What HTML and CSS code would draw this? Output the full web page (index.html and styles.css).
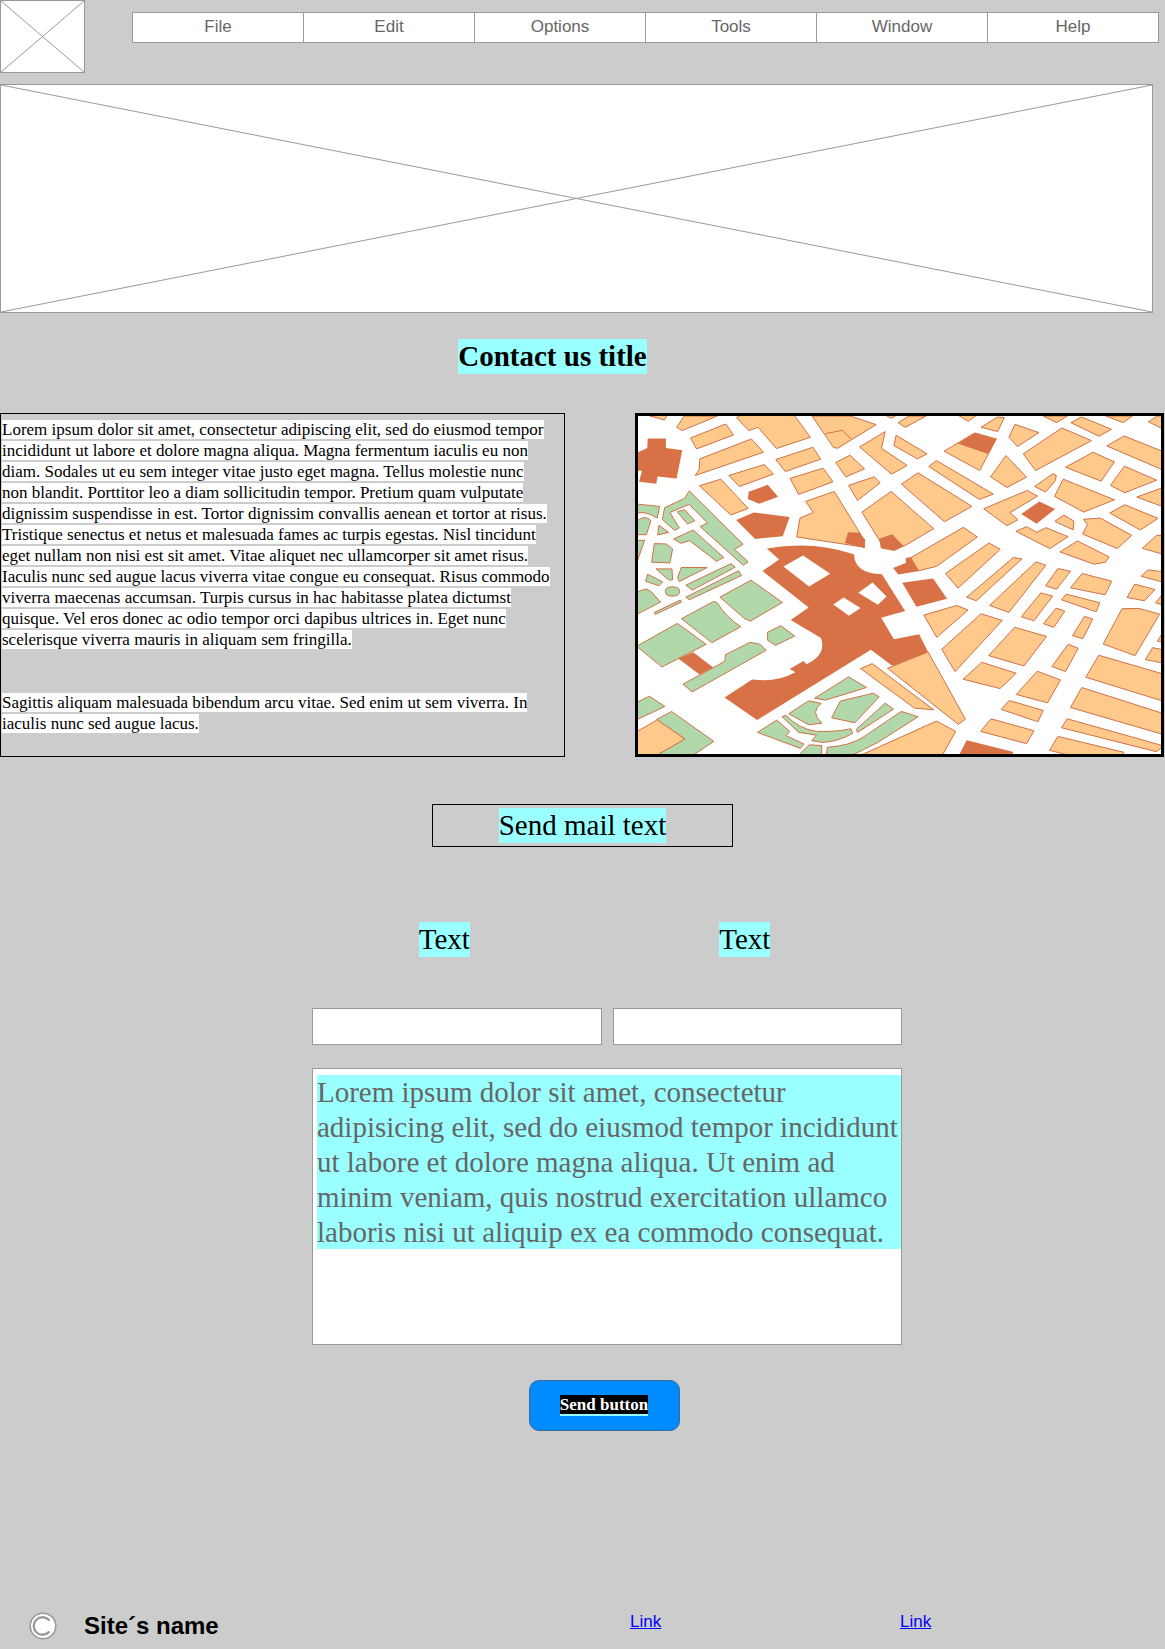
FILE: index.html
```html
<!DOCTYPE html>
<html lang="en">
<head>
<meta charset="utf-8">
<meta name="viewport" content="width=device-width, initial-scale=1">
<title>Contact us</title>
<link rel="stylesheet" href="styles.css">
</head>
<body>
<header class="header">
  <svg class="placeholder logo" viewBox="0 0 100 100" preserveAspectRatio="none" role="img" aria-label="Logo"><path d="M0 0L100 100M100 0L0 100"/></svg>
  <nav class="menu">
    <a href="#">File</a>
    <a href="#">Edit</a>
    <a href="#">Options</a>
    <a href="#">Tools</a>
    <a href="#">Window</a>
    <a href="#">Help</a>
  </nav>
</header>
<main>
  <svg class="placeholder banner" viewBox="0 0 100 100" preserveAspectRatio="none" role="img" aria-label="Banner"><path d="M0 0L100 100M100 0L0 100"/></svg>
  <h1 class="title"><span class="mark">Contact us title</span></h1>
  <section class="about">
    <div class="copy">
      <p><span>Lorem ipsum dolor sit amet, consectetur adipiscing elit, sed do eiusmod tempor incididunt ut labore et dolore magna aliqua. Magna fermentum iaculis eu non diam. Sodales ut eu sem integer vitae justo eget magna. Tellus molestie nunc non blandit. Porttitor leo a diam sollicitudin tempor. Pretium quam vulputate dignissim suspendisse in est. Tortor dignissim convallis aenean et tortor at risus. Tristique senectus et netus et malesuada fames ac turpis egestas. Nisl tincidunt eget nullam non nisi est sit amet. Vitae aliquet nec ullamcorper sit amet risus. Iaculis nunc sed augue lacus viverra vitae congue eu consequat. Risus commodo viverra maecenas accumsan. Turpis cursus in hac habitasse platea dictumst quisque. Vel eros donec ac odio tempor orci dapibus ultrices in. Eget nunc scelerisque viverra mauris in aliquam sem fringilla.</span></p>
      <p><span>Sagittis aliquam malesuada bibendum arcu vitae. Sed enim ut sem viverra. In iaculis nunc sed augue lacus.</span></p>
    </div>
    <svg class="map" viewBox="24 33 1572 1017" preserveAspectRatio="none" role="img" aria-label="Map">
      <!-- north-west -->
      <g>
        <path class="block" d="M60 33L103 45L112 30ZM140 67L163 33L262 33L157 77ZM182 99L288 57L311 90L200 132ZM210 162L365 102L401 142L196 212L208 194ZM297 212L404 179L431 208L329 245ZM209 243L273 223L355 311L303 331ZM320 38L335 30H493L542 97L440 131L385 67L357 77ZM438 164L550 127L573 163L467 200ZM481 221L580 190L610 231L507 269ZM528 290L614 260L692 387L706 428L501 397L511 340L551 323ZM547 33H662L740 59L624 130L612 128ZM588 86L638 76L665 103M618 173L661 151L705 192L649 216ZM657 242L734 216L752 234L684 287ZM697 322L785 260L913 372L823 425L754 414ZM690 126L767 80L756 130L833 182L786 208ZM767 30L785 40L802 30Z"/>
        <path class="brown" d="M53 101H108V129L157 136L140 221L83 215L79 237L27 231L36 198H24V142L52 129ZM357 261L414 240L445 276L388 297L354 283ZM319 346L372 323L480 337L459 395L376 403ZM655 383L690 384L707 405L705 430L646 415ZM749 402L788 389L823 425L794 439L754 431Z"/>
        <path class="brown" d="M411 432Q548 407 673 449Q676 508 757 509L827 620L755 640L793 705L869 690L896 743L795 783H786L724 736L382 948L284 880L367 826Q440 836 497 804L480 794L521 770L531 780Q591 752 574 701L483 647L537 609L398 499L448 465Z"/>
        <path class="hole" d="M461 486L520 453L602 508L538 546ZM686 565L729 534L771 576L745 601ZM611 600L642 579L693 611L658 634Z"/>
        <path class="park" d="M20 298L89 305L82 340Q45 317 20 326ZM20 350Q44 328 63 348L49 390H20ZM83 391L87 362L116 383ZM20 407H44L20 475ZM65 473L73 417L109 418L128 433L120 475ZM104 309L164 281L178 258L340 419L314 434L355 472L340 482L211 366L233 355L178 299L120 323L148 370L134 377L97 344ZM142 321L164 315L195 348L173 358ZM131 403L190 376L282 459L260 470L179 408L153 416ZM78 493H126L128 526H116ZM154 489H232L148 531L143 520ZM47 530L53 509L98 532L87 544ZM168 542L304 477L316 488L187 557ZM168 578L326 499L335 513L178 586ZM270 578L364 527L458 594L362 650L345 643Z"/>
      </g>
      <!-- north-east -->
      <g transform="translate(795 0)">
        <path class="block" d="M11 53L44 33H95L32 67ZM-2 122L5 91L98 147L69 162ZM149 139L241 84L306 102L256 197ZM190 30H248L221 49ZM260 67L310 36L330 38L310 80ZM344 97L362 58L434 83L370 125ZM387 147L503 69L592 107L424 197ZM289 216L335 152L397 217L338 248ZM103 185L126 167L297 268L255 284ZM21 238L71 204L233 305L150 351ZM447 33H520L487 53ZM530 53L562 36L652 73L615 94ZM635 33H715L688 53ZM763 50L790 33H810V74ZM638 123L690 93L810 141V197ZM514 187L597 142L661 171L621 229ZM649 242L691 184L788 226L692 264ZM421 245L476 207L486 211L484 227L454 262ZM507 223L661 285L569 322L481 275ZM728 277L810 247V307ZM268 312L399 257L430 274L347 324L371 345L338 363ZM647 325L692 300L792 341L739 376ZM482 350L509 331L539 349L537 376ZM568 344L618 340L713 392L670 432L565 388L580 360ZM365 380L397 366L428 383L455 369L522 396L467 432ZM745 431L788 392H810V450ZM497 442L550 409L645 457L634 473L600 479ZM46 461L207 368L249 397L127 485L72 499ZM153 507L284 415L318 434L191 551ZM741 515L762 496L810 502V534Z"/>
        <path class="brown" d="M190 116L241 84L306 104L281 147ZM381 328L435 290L483 313L427 357ZM-4 490L34 475V460L49 457L74 499L11 510ZM23 535L116 522L158 583L66 607Z"/>
      </g>
      <!-- south-west -->
      <g transform="translate(0 525)">
        <path class="brown" d="M145 238L190 219L250 265L209 286Z"/>
        <path class="park" d="M20 38L48 28L64 37L92 68L20 105ZM73 99L151 62L155 68L76 105ZM106 36Q106 22 127 22Q149 22 149 36Q149 50 127 50Q106 50 106 36ZM20 201L142 132L229 195L96 263ZM155 118L251 66L261 69Q290 115 333 142L246 190ZM413 159L453 139L495 170L437 198L414 183ZM159 315L285 246L287 226L361 189L391 195L409 213L187 338ZM20 370L58 351L105 382L20 422ZM80 421L125 397L252 487L188 530H75L165 480ZM555 357L657 293L711 325L587 363ZM477 404L537 365L575 373Q539 398 577 432L537 437ZM606 416L632 366L731 342L749 353L676 431ZM680 451L767 372L792 390L684 460ZM457 413L469 409Q507 449 560 457Q620 459 664 449L669 463Q620 490 577 490L546 485L560 468L507 460ZM383 460L441 423L480 457L469 470L523 495L512 508ZM505 530L539 497L577 500L575 530ZM590 530L593 505Q660 500 700 475L815 397L866 413Q800 455 745 490L665 530Z"/>
        <path class="block" d="M20 458L82 422L165 480L78 530H20ZM693 268L728 253L913 392L855 387ZM774 267L896 218L1008 420L987 436ZM690 530L921 426L979 457L938 530Z"/>
      </g>
      <!-- south-east -->
      <g transform="translate(795 525)">
        <path class="block" d="M217 53L357 -66L383 -62L246 64ZM286 78L425 -53L455 -43L344 99ZM88 107L187 78L221 92L127 174ZM142 210L260 103L324 123L182 277ZM381 112L440 40L475 50L419 124ZM454 19L491 -33L529 -25L487 29ZM529 25L564 -18L653 5L633 46ZM502 61L516 44L617 70L606 97ZM448 133L486 86L512 95L479 144ZM535 169L571 111L596 119L566 178ZM283 229L361 144L457 171L389 260ZM206 300L262 249L366 282L317 328ZM366 346L429 276L499 302L460 371ZM473 262L522 195L552 207L514 277ZM321 391L345 364L447 394L431 428ZM259 457L290 419L419 455L397 494ZM627 194L684 88L735 87L797 104L723 229ZM699 54L722 14L783 30L751 64ZM785 70L810 38V78ZM790 185L810 155V190ZM754 241L776 205L810 212V252ZM575 294L614 228L810 285V367ZM529 385L563 325L810 404V467ZM502 446L519 419L810 501L787 518ZM466 514L491 472L690 520L680 530H530Z"/>
        <path class="brown" d="M196 524L217 484L358 519L350 530H190Z"/>
      </g>
    </svg>
  </section>

  <h2 class="subtitle"><span class="mark">Send mail text</span></h2>

  <form class="form">
    <div class="field">
      <label for="first"><span class="mark">Text</span></label>
      <input id="first" type="text">
    </div>
    <div class="field">
      <label for="second"><span class="mark">Text</span></label>
      <input id="second" type="text">
    </div>
    <textarea class="message" aria-label="Message">Lorem ipsum dolor sit amet, consectetur adipisicing elit, sed do eiusmod tempor incididunt ut labore et dolore magna aliqua. Ut enim ad minim veniam, quis nostrud exercitation ullamco laboris nisi ut aliquip ex ea commodo consequat.</textarea>
    <button class="send" type="button"><span>Send button</span></button>
  </form>
</main>
<footer class="footer">
  <div class="brand">
    <svg class="copyright" viewBox="0 0 28 28" aria-hidden="true">
      <circle cx="14" cy="14" r="12.8" fill="#fff" stroke="#999" stroke-width="1.6"/>
      <path d="M19.8 7.8A8.8 8.8 0 1 0 19.8 20.2" fill="none" stroke="#999" stroke-width="2.4" stroke-linecap="round"/>
    </svg>
    <strong>Site´s name</strong>
  </div>
  <a href="#">Link</a>
  <a href="#">Link</a>
</footer>
</body>
</html>
```
FILE: styles.css
```css
* {
  box-sizing: border-box;
}

body {
  margin: 0;
  background: #ccc;
  color: #000;
  font-family: "Liberation Serif", "Times New Roman", serif;
}

h1,
h2,
p {
  margin: 0;
  font-weight: normal;
}

.header {
  display: flex;
  align-items: flex-start;
  gap: 47px;
  padding-right: 6px;
}

.placeholder {
  display: block;
  background: #fff;
  border: 1px solid #999;
}

.placeholder path {
  fill: none;
  stroke: #999;
  stroke-width: 1px;
  vector-effect: non-scaling-stroke;
}

.logo {
  flex: none;
  width: 85px;
  height: 73px;
}

.menu {
  display: flex;
  flex: 1;
  margin-top: 12px;
  border: 1px solid #999;
  background: #fff;
}

.menu a {
  flex: 1;
  padding: 1px 0 2px;
  color: #666;
  font: 17px/26px "Liberation Sans", Arial, sans-serif;
  text-align: center;
  text-decoration: none;
}

.menu a + a {
  border-left: 1px solid #999;
}

.banner {
  width: calc(100% - 12px);
  height: 229px;
  margin-top: 11px;
}

.mark {
  display: inline-block;
  background: #9ff;
  font-size: 29px;
  line-height: 35px;
  vertical-align: top;
}

.title {
  padding: 26px 60px 39px 0;
  line-height: 35px;
  text-align: center;
}

.title .mark {
  font-weight: bold;
}

.about {
  display: grid;
  grid-template-columns: 565fr 529fr;
  gap: 70px;
  padding-right: 1px;
}

.copy {
  padding: 5px 13px 22px 1px;
  border: 1px solid #000;
  font-size: 17px;
  line-height: 21px;
}

.copy p + p {
  margin-top: 42px;
}

.copy span {
  background: #fff;
}

.map {
  display: block;
  width: 100%;
  height: 344px;
  border: 3px solid #000;
  background: #fff;
}

.map path {
  stroke: #d07045;
  stroke-width: 3px;
}

.map .block {
  fill: #ffc98b;
}

.map .park {
  fill: #b0d8ab;
}

.map .brown {
  fill: #d87146;
  stroke: none;
}

.map .hole {
  fill: #fff;
  stroke: none;
}

.subtitle {
  width: 301px;
  margin: 47px auto 0;
  padding: 3px 0;
  border: 1px solid #000;
  line-height: 35px;
  text-align: center;
}

.form {
  display: grid;
  grid-template-columns: 1fr 1fr;
  gap: 23px 11px;
  width: 639px;
  max-width: 100%;
  margin: 75px auto 0;
  padding-left: 49px;
}

.field {
  display: grid;
  gap: 51px;
}

.field label {
  padding-right: 25px;
  text-align: center;
}

.field input {
  width: 100%;
  height: 37px;
  padding: 0 4px;
  border: 1px solid #999;
  background: #fff;
  font: 17px "Liberation Serif", serif;
}

.message {
  grid-column: 1 / -1;
  display: block;
  height: 277px;
  padding: 6px 0 95px 4px;
  border: 1px solid #999;
  background: linear-gradient(#9ff, #9ff) no-repeat content-box, #fff;
  color: #666;
  font: 29px/35px "Liberation Serif", serif;
  resize: none;
  overflow: hidden;
}

.send {
  grid-column: 1 / -1;
  justify-self: center;
  width: 151px;
  height: 51px;
  margin: 12px 6px 0 0;
  border: 1px solid #36689c;
  border-radius: 10px;
  background: #008cff;
  color: #fff;
  font: bold 17px/19px "Liberation Serif", serif;
}

.send span {
  display: inline-block;
  border-bottom: 2px solid #9ff;
  background: #000;
}

.footer {
  display: grid;
  grid-template-columns: 630fr 270fr 265fr;
  align-items: start;
  margin-top: 181px;
  padding-bottom: 8px;
  font: 17px/20px "Liberation Sans", Arial, sans-serif;
}

.footer a {
  justify-self: start;
  color: #00f;
}

.brand {
  display: flex;
  align-items: center;
  gap: 27px;
  padding-left: 29px;
}

.brand strong {
  font-size: 24px;
  line-height: 28px;
}

.copyright {
  width: 28px;
  height: 28px;
}
```
